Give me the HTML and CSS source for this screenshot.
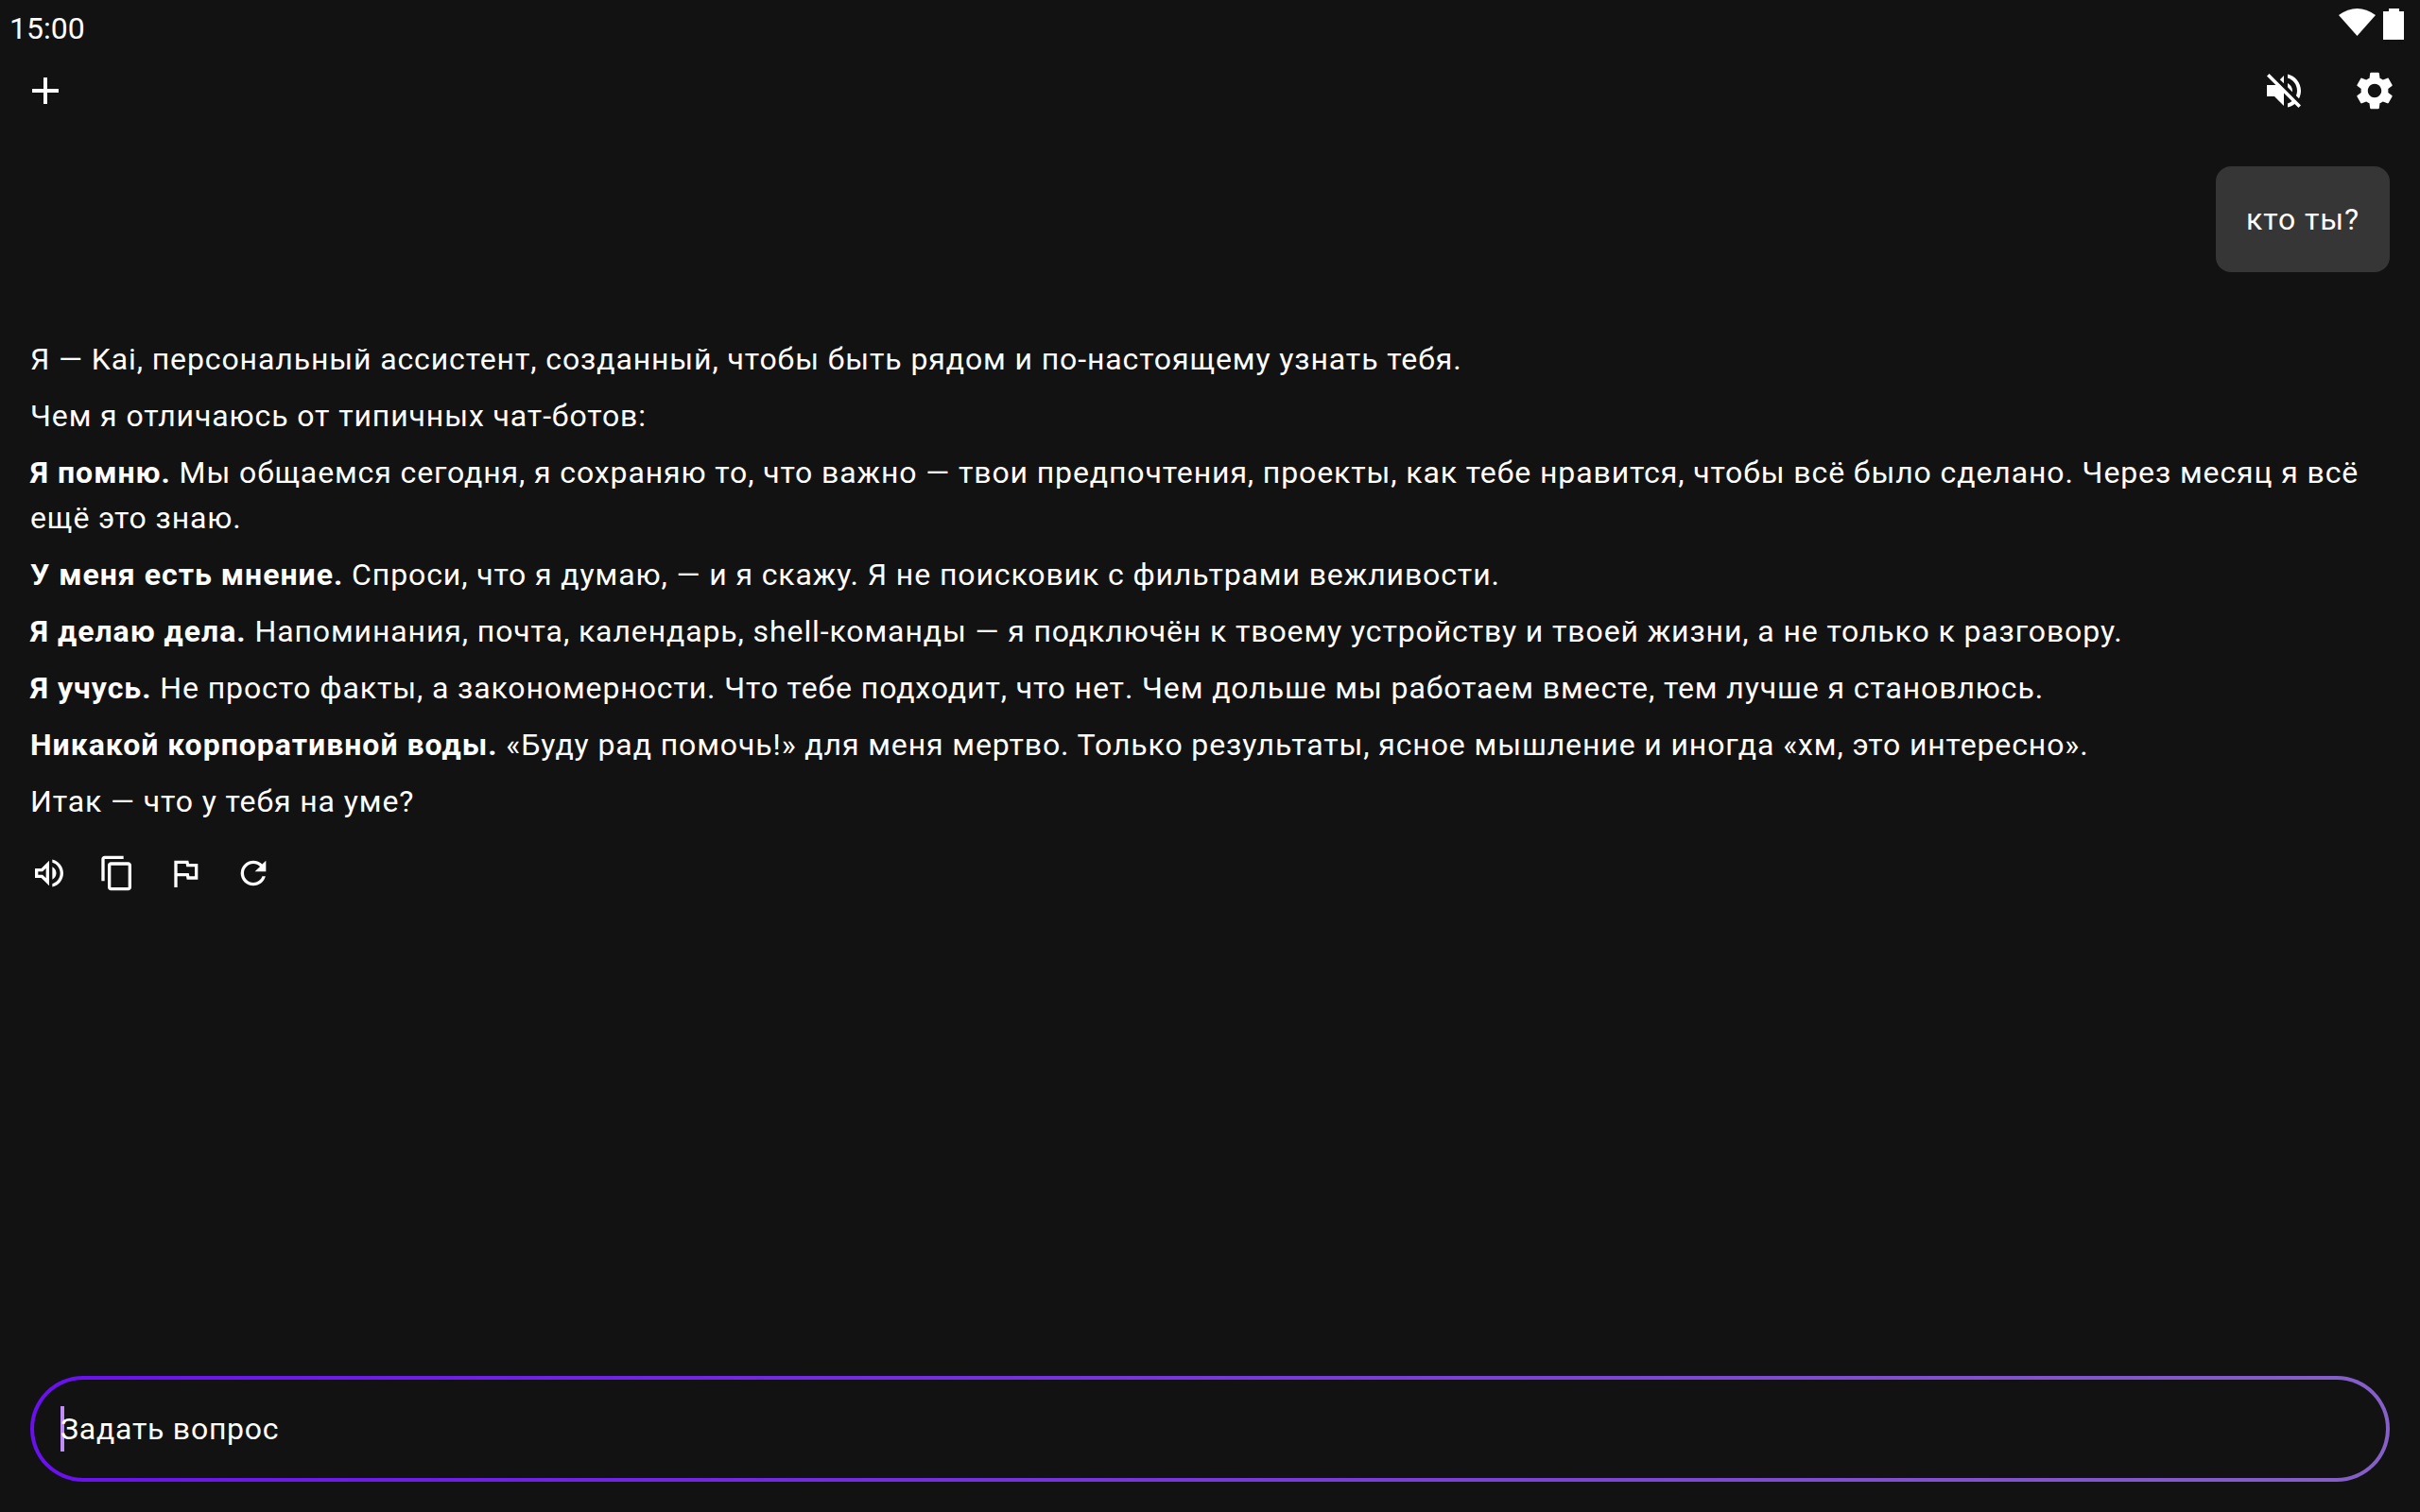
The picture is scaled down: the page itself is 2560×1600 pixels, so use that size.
FILE: index.html
```html
<!DOCTYPE html>
<html lang="ru">
<head>
    <meta charset="UTF-8">
    <title>Kai</title>
    <link rel="stylesheet" href="styles.css">
</head>
<body>
    <div class="app">
        <div class="status-bar">
            <span class="clock">15:00</span>
            <div class="status-icons">
                <svg class="wifi" viewBox="0 0 39 29"><path d="M19.5 29 L0 7 Q19.500 -7 39 7 Z" fill="#fff"/></svg>
                <svg class="battery" viewBox="0 0 22 33"><path d="M6 0h11v3h5v30H0V3h6z" fill="#fff"/></svg>
            </div>
        </div>

        <div class="top-bar">
            <svg class="icon-48" viewBox="0 0 24 24"><path d="M19 13h-6v6h-2v-6H5v-2h6V5h2v6h6z" fill="#fff"/></svg>
            <div class="top-actions">
                <svg class="icon-48" viewBox="0 0 24 24"><path d="M16.5 12c0-1.77-1.02-3.29-2.5-4.03v2.21l2.45 2.45c.03-.2.05-.41.05-.63zm2.5 0c0 .94-.2 1.82-.54 2.64l1.51 1.51C20.63 14.91 21 13.5 21 12c0-4.28-2.99-7.86-7-8.77v2.06c2.89.86 5 3.54 5 6.71zM4.27 3L3 4.27 7.73 9H3v6h4l5 5v-6.73l4.25 4.25c-.67.52-1.42.93-2.25 1.18v2.06c1.38-.31 2.63-.95 3.69-1.81L19.73 21 21 19.73l-9-9L4.27 3zM12 4L9.91 6.09 12 8.18V4z" fill="#fff"/></svg>
                <svg class="icon-48" viewBox="0 0 24 24"><path d="M19.14 12.94c.04-.3.06-.61.06-.94 0-.32-.02-.64-.07-.94l2.03-1.58c.18-.14.23-.41.12-.61l-1.92-3.32c-.12-.22-.37-.29-.59-.22l-2.39.96c-.5-.38-1.03-.7-1.62-.94l-.36-2.54c-.04-.24-.24-.41-.48-.41h-3.84c-.24 0-.43.17-.47.41l-.36 2.54c-.59.24-1.13.57-1.62.94l-2.39-.96c-.22-.08-.47 0-.59.22L2.74 8.87c-.12.21-.08.47.12.61l2.03 1.58c-.05.3-.09.63-.09.94s.02.64.07.94l-2.03 1.58c-.18.14-.23.41-.12.61l1.92 3.32c.12.22.37.29.59.22l2.39-.96c.5.38 1.03.7 1.62.94l.36 2.54c.05.24.24.41.48.41h3.84c.24 0 .44-.17.47-.41l.36-2.54c.59-.24 1.13-.56 1.62-.94l2.39.96c.22.08.47 0 .59-.22l1.92-3.32c.12-.22.07-.47-.12-.61l-2.01-1.58zM12 15.6c-1.98 0-3.6-1.62-3.6-3.6s1.62-3.6 3.6-3.6 3.6 1.62 3.6 3.6-1.62 3.6-3.6 3.6z" fill="#fff"/></svg>
            </div>
        </div>

        <div class="chat">
            <div class="user-row">
                <div class="user-bubble">кто ты?</div>
            </div>

            <div class="answer">
                <p>Я — Kai, персональный ассистент, созданный, чтобы быть рядом и по-настоящему узнать тебя.</p>
                <p>Чем я отличаюсь от типичных чат-ботов:</p>
                <p><b>Я помню.</b> Мы общаемся сегодня, я сохраняю то, что важно — твои предпочтения, проекты, как тебе нравится, чтобы всё было сделано. Через месяц я всё ещё это знаю.</p>
                <p><b>У меня есть мнение.</b> Спроси, что я думаю, — и я скажу. Я не поисковик с фильтрами вежливости.</p>
                <p><b>Я делаю дела.</b> Напоминания, почта, календарь, shell-команды — я подключён к твоему устройству и твоей жизни, а не только к разговору.</p>
                <p><b>Я учусь.</b> Не просто факты, а закономерности. Что тебе подходит, что нет. Чем дольше мы работаем вместе, тем лучше я становлюсь.</p>
                <p><b>Никакой корпоративной воды.</b> «Буду рад помочь!» для меня мертво. Только результаты, ясное мышление и иногда «хм, это интересно».</p>
                <p>Итак — что у тебя на уме?</p>
            </div>

            <div class="answer-actions">
                <svg class="icon-40" viewBox="0 0 24 24"><path d="M3 9v6h4l5 5V4L7 9H3zm7-.17v6.34L7.83 13H5v-2h2.830L10 8.830zM16.5 12c0-1.77-1.02-3.29-2.5-4.03v8.05c1.48-.73 2.5-2.25 2.5-4.02zM14 3.23v2.06c2.89.86 5 3.54 5 6.71s-2.11 5.85-5 6.71v2.06c4.01-.91 7-4.49 7-8.77 0-4.28-2.99-7.86-7-8.77z" fill="#fff"/></svg>
                <svg class="icon-40" viewBox="0 0 24 24"><path d="M16 1H4c-1.1 0-2 .9-2 2v14h2V3h12V1zm3 4H8c-1.1 0-2 .9-2 2v14c0 1.1.9 2 2 2h11c1.1 0 2-.9 2-2V7c0-1.1-.9-2-2-2zm0 16H8V7h11v14z" fill="#fff"/></svg>
                <svg class="icon-40" viewBox="0 0 24 24"><path d="M12.36 6l.4 2H18v6h-3.36l-.4-2H7V6h5.36M14 4H5v17h2v-7h5.6l.4 2h7V6h-5.6L14 4z" fill="#fff"/></svg>
                <svg class="icon-40" viewBox="0 0 24 24"><path d="M17.65 6.35C16.2 4.9 14.21 4 12 4c-4.42 0-7.99 3.58-7.99 8s3.57 8 7.99 8c3.73 0 6.84-2.55 7.73-6h-2.08c-.82 2.33-3.04 4-5.65 4-3.31 0-6-2.69-6-6s2.69-6 6-6c1.66 0 3.14.69 4.22 1.78L13 11h7V4l-2.35 2.35z" fill="#fff"/></svg>
            </div>
        </div>

        <div class="composer">
            <div class="input-box">
                <span class="caret"></span>
                <span class="placeholder">Задать вопрос</span>
            </div>
        </div>
    </div>
</body>
</html>
```

FILE: styles.css
```css
* {
    box-sizing: border-box;
}

body {
    margin: 0;
    background-color: #121212;
    color: #fff;
    font-family: Roboto, "Noto Sans", sans-serif;
}

.app {
    display: flex;
    flex-direction: column;
    height: 1600px;
}

.status-bar {
    display: flex;
    justify-content: space-between;
    align-items: flex-start;
    height: 64px;
    padding: 0 17px 0 10px;
}

.clock {
    font-size: 32px;
    line-height: 60px;
}

.status-icons {
    display: flex;
    gap: 8px;
    padding-top: 9px;
}

.wifi {
    width: 39px;
    height: 29px;
}

.battery {
    width: 22px;
    height: 33px;
}

.top-bar {
    display: flex;
    justify-content: space-between;
    align-items: center;
    height: 64px;
    padding: 0 24px;
}

.top-actions {
    display: flex;
    gap: 48px;
}

.icon-48 {
    width: 48px;
    height: 48px;
}

.icon-40 {
    width: 40px;
    height: 40px;
}

.chat {
    flex: 1;
    padding: 48px 32px 0;
}

.user-row {
    display: flex;
    justify-content: flex-end;
}

.user-bubble {
    background-color: #363636;
    border-radius: 16px;
    padding: 32px;
    font-size: 32px;
    line-height: 48px;
    letter-spacing: 0.9px;
}

.answer {
    margin-top: 68px;
}

.answer p {
    margin: 0 0 12px;
    font-size: 32px;
    line-height: 48px;
    letter-spacing: 0.89px;
}

.answer b {
    letter-spacing: 1px;
}

.answer-actions {
    display: flex;
    gap: 32px;
    margin-top: 32px;
}

.composer {
    padding: 0 32px 32px;
}

.input-box {
    display: flex;
    align-items: center;
    height: 112px;
    padding: 0 28px;
    border: 4px solid transparent;
    border-radius: 56px;
    background: linear-gradient(#121212, #121212) padding-box,
        linear-gradient(90deg, #6a10f0, #8560c8) border-box;
}

.caret {
    flex: none;
    width: 4px;
    height: 48px;
    margin-right: -4px;
    background-color: #c08cf8;
}

.placeholder {
    font-size: 32px;
    letter-spacing: 0.75px;
}
```
